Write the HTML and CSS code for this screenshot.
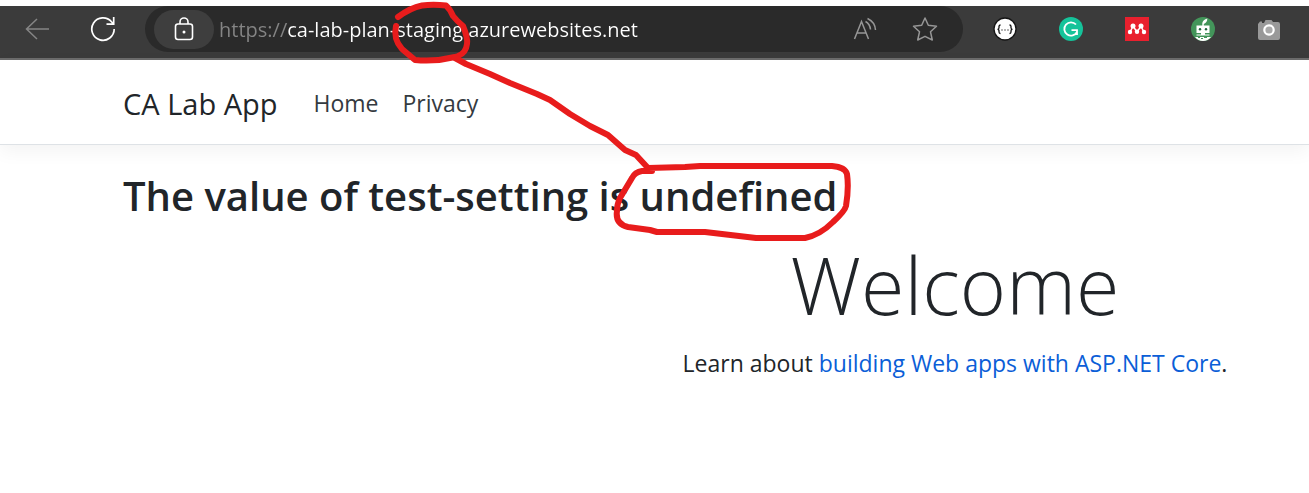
FILE: index.html
```html
<!DOCTYPE html>
<html lang="en">
<head>
<meta charset="utf-8">
<title>CA Lab App</title>
<link rel="stylesheet" href="styles.css">
</head>
<body>
<div class="page">
  <div class="toolbar">
    <button class="tool back" aria-label="Back">
      <svg width="26" height="24" viewBox="0 0 26 24" fill="none" stroke="#858585" stroke-width="1.5"><path d="M25 12H2M13 2 2.500 12 13 22"/></svg>
    </button>
    <button class="tool" aria-label="Refresh">
      <svg width="26" height="26" viewBox="0 0 26 26" fill="none" stroke="#fff" stroke-width="1.700"><path d="M24.200 13A11.200 11.200 0 1 1 21.500 5.800L23.500 8M23.700 1V8.200H16.500"/></svg>
    </button>
    <div class="address">
      <button class="site-info" aria-label="Site information">
        <svg width="20" height="26" viewBox="0 0 20 26" fill="none" stroke="#fff" stroke-width="1.600"><rect x="1.500" y="8" width="17" height="15.500" rx="2.500"/><path d="M6 8V6a4 4 0 0 1 8 0v2"/><circle cx="10" cy="16" r="1.500" fill="#fff" stroke="none"/></svg>
      </button>
      <input class="url" type="text" aria-label="Address" value="https://ca-lab-plan-staging.azurewebsites.net">
      <button class="tool" aria-label="Read aloud">
        <svg width="24" height="24" viewBox="0 0 24 24" fill="none" stroke="#969696" stroke-width="1.500"><path d="M1.500 22 8.500 4.500 15.500 22M4 16h9M12.500 4.500Q17 7 17.500 12.500M14.500 1.500Q22 5 22.500 13"/></svg>
      </button>
      <button class="tool" aria-label="Favorite">
        <svg width="26" height="26" viewBox="0 0 26 26" fill="none" stroke="#969696" stroke-width="1.500" stroke-linejoin="round"><path d="M13 2 16.300 9.300 24.500 10.200 18.500 15.800 20.300 24 13 20.300 5.700 24 7.500 15.800 1.500 10.200 9.700 9.300Z"/></svg>
      </button>
    </div>
    <div class="extensions">
      <button class="tool" aria-label="API viewer">
        <svg width="24" height="24" viewBox="0 0 24 24"><circle cx="12" cy="12" r="11" fill="#fff" stroke="#151515" stroke-width="1.300"/><g fill="none" stroke="#111" stroke-width="1.300"><path d="M7.500 8Q6 8 6 9.500V10.800Q6 12.300 4.500 12.300 6 12.300 6 13.800V15Q6 16.500 7.500 16.500M16.500 8Q18 8 18 9.500V10.800Q18 12.300 19.500 12.300 18 12.300 18 13.800V15Q18 16.500 16.500 16.500"/></g><g fill="#333"><circle cx="9" cy="13" r=".7"/><circle cx="12" cy="13" r=".7"/><circle cx="15" cy="13" r=".7"/></g></svg>
      </button>
      <button class="tool" aria-label="Writing assistant">
        <svg width="24" height="24" viewBox="0 0 24 24"><circle cx="12" cy="12" r="12" fill="#15c39a"/><g fill="none" stroke="#fff" stroke-width="1.800"><path d="M17 7.500A6.700 6.700 0 1 0 18 15M12.500 13.200H18V18"/></g></svg>
      </button>
      <button class="tool" aria-label="Reference manager">
        <svg width="24" height="24" viewBox="0 0 24 24"><path fill="#e9202e" d="M0 0h24v24H0z"/><path d="M5 15 8 9.500 12 14.500 16 9.500 19 15" fill="none" stroke="#fff" stroke-width="1.500"/><g fill="#fff"><circle cx="8" cy="9" r="2.500"/><circle cx="16" cy="9" r="2.500"/><circle cx="5" cy="15" r="2.200"/><circle cx="12" cy="14.800" r="2.200"/><circle cx="19" cy="15" r="2.200"/></g></svg>
      </button>
      <button class="tool" aria-label="Robot assistant">
        <svg width="24" height="24" viewBox="0 0 24 24"><circle cx="12" cy="12" r="12" fill="#43955a"/><g fill="#fff"><path d="M11.300 8.500V6Q12 2.500 16.300 1.500 16.500 5 12.800 7V8.500H18.500V16H5.500V8.500ZM10 16H14V17.500H18.500V18.500H5.500V17.500H10ZM4 20H20Q17 24 12 24 7 24 4 20Z"/></g><g fill="#1f643c"><circle cx="9" cy="12.300" r="1.200"/><circle cx="15" cy="12.300" r="1.200"/></g><path d="M7 20.500h2m1 1h2m1-1h3" stroke="#43955a"/></svg>
      </button>
      <button class="tool" aria-label="Screenshot">
        <svg width="24" height="24" viewBox="0 0 24 24"><path fill="#999" d="M1 7 3 4.500H5V6H7L8.500 3H14.500L16 5H21Q23 5 23 7V21Q23 23 21 23H3Q1 23 1 21Z"/><circle cx="12" cy="13" r="4.700" fill="#aaa" stroke="#fff" stroke-width="2.200"/></svg>
      </button>
    </div>
  </div>

  <header class="navbar">
    <a class="brand" href="#">CA Lab App</a>
    <nav class="links">
      <a href="#">Home</a>
      <a href="#">Privacy</a>
    </nav>
  </header>

  <main class="content">
    <h2 class="setting">The value of test-setting is undefined</h2>
    <section class="welcome">
      <h1 class="display">Welcome</h1>
      <p class="learn">Learn about <a href="#">building Web apps with ASP.NET Core</a>.</p>
    </section>
  </main>

  <svg class="annotation" width="860" height="250" viewBox="0 0 860 250" aria-hidden="true">
    <path d="M398 17Q410 8 422 5.500 433 4 446 5.500 450 9 453 16 457 21 463 26 468 38 467 44 466 53 458 56L455 57Q435 62 415 60L402 49Q393 39 396 26"/>
    <path d="M455 58 466 64 490 74 510 83 537 94 550 100 570 114 590 126 608 135 625 150 636 155 648 168"/>
    <path d="M652 171H642Q635 172 632 178L620 198Q617 204 617 211 615 224 628 227L650 230 657 232H705L722 234 756 238H805Q820 235 833 222 845 211 846 206 849 188 847 174 845 167 832 166H700L685 167 648 168"/>
  </svg>
</div>
</body>
</html>
```
FILE: styles.css
```css
* {
  box-sizing: border-box;
}

body {
  margin: 0;
  background: #fff;
  color: #212529;
  font-family: "Open Sans", "Noto Sans", sans-serif;
  font-size: 23px;
}

.page {
  position: relative;
  padding-top: 6px;
  overflow: hidden;
}

.toolbar {
  display: flex;
  align-items: center;
  height: 54px;
  padding: 0 28px 6px 24px;
  background: #3b3b3b;
  border-bottom: 2px solid #6c6c6c;
}

.tool,
.site-info {
  display: flex;
  align-items: center;
  justify-content: center;
  flex: none;
  padding: 0;
  border: 0;
  background: none;
}

.back {
  margin-right: 40px;
}

.address {
  display: flex;
  flex: 1;
  align-items: center;
  gap: 35px;
  height: 46px;
  margin: 0 30px 0 29px;
  padding: 0 25px 0 9px;
  border-radius: 23px;
  background: #2a2a2a;
}

.site-info {
  width: 60px;
  height: 39px;
  margin-right: -30px;
  border-radius: 20px;
  background: #3e3e3e;
}

.url {
  flex: 1;
  min-width: 0;
  padding: 0;
  border: 0;
  outline: 0;
  font: 20px "Open Sans", "Noto Sans", sans-serif;
  color: transparent;
  background: linear-gradient(90deg, #858585 68px, #fff 68px);
  background-clip: text;
  -webkit-background-clip: text;
}

.extensions {
  display: flex;
  gap: 42px;
}

.navbar {
  display: flex;
  align-items: center;
  gap: 36px;
  height: 85px;
  padding: 2px 123px 0;
  border-bottom: 1px solid #dee2e6;
  box-shadow: 0 6px 18px rgba(0, 0, 0, 0.05);
}

.brand {
  font-size: 29px;
  color: #212529;
  text-decoration: none;
}

.links {
  display: flex;
  gap: 24px;
}

.links a {
  color: #343a40;
  text-decoration: none;
}

.content {
  padding: 24px 0 24px 123px;
}

.setting {
  margin: 0;
  font-size: 40px;
  font-weight: 600;
  line-height: 54px;
}

.welcome {
  margin: 10px 0 0 478px;
  text-align: center;
}

.display {
  margin: 0;
  font-size: 79px;
  font-weight: 300;
  line-height: 104px;
}

.learn {
  margin: 8px 0 0;
  line-height: 36px;
}

.learn a {
  color: #0b5ed7;
  text-decoration: none;
}

.annotation {
  position: absolute;
  top: 0;
  left: 0;
  fill: none;
  stroke: #e81c1c;
  stroke-width: 6;
  stroke-linecap: round;
  stroke-linejoin: round;
  pointer-events: none;
}
```
